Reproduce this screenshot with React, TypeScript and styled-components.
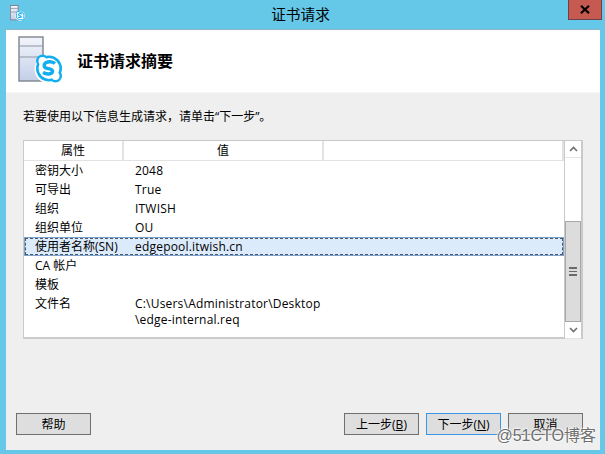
import { createGlobalStyle } from 'styled-components'
import styled from 'styled-components'

const GlobalStyle = createGlobalStyle`
  html, body {
    margin: 0;
    padding: 0;
    background: #65c8e9;
  }
  * { box-sizing: border-box; }
`

const Frame = styled.div`
  position: relative;
  width: 605px;
  height: 454px;
  background: #65c8e9;
  padding: 0 5px 4px 6px;
  display: flex;
  flex-direction: column;
  overflow: hidden;
  color: #000;
  font-family: "Open Sans", "Noto Sans CJK SC", sans-serif;
  font-size: 12px;
`

const TitleBar = styled.div`
  position: relative;
  height: 29px;
  flex: none;
  display: flex;
  align-items: center;
  justify-content: center;
  padding: 0 5px 3px 0;
  font-size: 14.67px;
`

const TitleIcon = styled.div`
  position: absolute;
  left: 4px;
  top: 5px;
  display: flex;
`

const CloseButton = styled.div`
  position: absolute;
  right: -2px;
  top: 0;
  width: 34px;
  height: 20px;
  background: #c75a50;
  border: 1px solid #6b4048;
  border-top: none;
  display: flex;
  align-items: center;
  justify-content: center;
`

const Client = styled.div`
  flex: 1;
  display: flex;
  flex-direction: column;
  background: #efefef;
  border-top: 1px solid #8fb4cc;
`

const Header = styled.div`
  height: 63px;
  flex: none;
  background: #fff;
  border-bottom: 1px solid #f6f6f6;
  display: flex;
  align-items: center;
  gap: 13px;
  padding: 0 0 3px 12px;
`

const HeaderTitle = styled.div`
  font-size: 16px;
  font-weight: 700;
`

const Body = styled.div`
  flex: 1;
  display: flex;
  flex-direction: column;
  padding: 16px 17px 15px 10px;
`

const Intro = styled.div`
  height: 16px;
  line-height: 16px;
  margin: 0 0 0 7px;
  font-size: 12px;
  white-space: nowrap;
`

const ListView = styled.div`
  margin: 15px 0 0 7px;
  height: 199px;
  border: 2px solid #cacaca;
  border-left-width: 1px;
  border-top-width: 1px;
  background: #fff;
  display: flex;
`

const ListMain = styled.div`
  flex: 1;
  min-width: 0;
`

const HeaderRow = styled.div`
  height: 20px;
  display: grid;
  grid-template-columns: 100px 200px 1fr;
  border-bottom: 1px solid #e2e2e2;
`

const HeaderCell = styled.div`
  display: flex;
  align-items: center;
  justify-content: center;
  border-right: 2px solid #e2e2e2;
  font-size: 12px;
  padding-bottom: 1px;
`

const Row = styled.div<{ $selected?: boolean }>`
  position: relative;
  height: 19px;
  display: grid;
  grid-template-columns: 100px 1fr;
  padding-left: 11px;
  align-items: center;
  line-height: 19px;
  white-space: nowrap;
  background: ${({ $selected }) => ($selected ? '#dcebfc' : 'transparent')};
  ${({ $selected }) =>
    $selected
      ? `outline: 1px dashed #4c5866; outline-offset: -2px; box-shadow: inset 0 0 0 1px #7da2ce;`
      : ''}
`

const FileRow = styled(Row)`
  height: 34px;
  align-items: start;
  line-height: 16px;
  padding-top: 2px;
`

const Value = styled.span`
  letter-spacing: 0.2px;
`

const ScrollBar = styled.div`
  width: 17px;
  flex: none;
  display: flex;
  flex-direction: column;
  border-left: 1px solid #cacaca;
`

const ScrollArrow = styled.div`
  height: 17px;
  flex: none;
  display: flex;
  align-items: center;
  justify-content: center;
  background: #fff;
  border-bottom: 1px solid #e4e4e4;
`

const ScrollTrack = styled.div`
  flex: 1;
  display: flex;
  flex-direction: column;
  background: #fff;
  padding-top: 63px;
`

const ScrollThumb = styled.div`
  height: 101px;
  background: #dcdcdc;
  border: 1px solid #a8a8a8;
  display: flex;
  align-items: center;
  justify-content: center;
`

const Grip = styled.div`
  width: 8px;
  height: 9px;
  border-top: 2px solid #6a6a6a;
  border-bottom: 2px solid #6a6a6a;
  background: linear-gradient(#6a6a6a, #6a6a6a) center / 100% 1px no-repeat;
`

const Footer = styled.div`
  margin-top: auto;
  display: flex;
  justify-content: space-between;
`

const ButtonGroup = styled.div`
  display: flex;
  gap: 7px;
`

const Button = styled.button<{ $focused?: boolean }>`
  width: 75px;
  height: 22px;
  padding: 0;
  background: #dedede;
  border: 1px solid ${({ $focused }) => ($focused ? '#3c96e6' : '#707070')};
  font-family: inherit;
  font-size: 12px;
  color: #000;
  display: flex;
  align-items: center;
  justify-content: center;
`

const Underlined = styled.span`
  text-decoration: underline;
`

const Watermark = styled.div`
  position: absolute;
  right: 9px;
  bottom: 8px;
  font-family: "Liberation Sans", "Noto Sans CJK SC", sans-serif;
  font-size: 16px;
  line-height: 20px;
  color: #6f6f6f;
  text-shadow: 0 0 2px #fff, 0 0 2px #fff, 0 0 3px #fff;
  white-space: nowrap;
`

function CertIcon({ size }: { size: 'large' | 'small' }) {
  const large = size === 'large'
  return (
    <svg width={large ? 46 : 15} height={large ? 48 : 16} viewBox="0 0 46 48">
      <defs>
        <linearGradient id={`srv-${size}`} x1="0" y1="0" x2="0" y2="1">
          <stop offset="0" stopColor="#f4f5fb" />
          <stop offset="1" stopColor="#c3cfe8" />
        </linearGradient>
      </defs>
      <rect x="1" y="1" width="24" height="44" fill={`url(#srv-${size})`} stroke="#7d8591" strokeWidth={large ? 1.4 : 3} />
      <path d="M1 10H25M1 21H25" stroke="#8d95a1" strokeWidth={large ? 1.2 : 2.5} />
      <circle cx="31" cy="33" r="14.5" fill="#fff" />
      <circle cx="24.5" cy="25" r="6.5" fill="#12aef0" />
      <circle cx="37.5" cy="40" r="6.5" fill="#12aef0" />
      <circle cx="31" cy="32.5" r="13" fill="#12aef0" />
      <circle cx="24.5" cy="25" r="4" fill="#fff" />
      <circle cx="37.5" cy="40" r="4" fill="#fff" />
      <circle cx="31" cy="32.5" r="10.4" fill="#fff" />
      <path
        d="M37 27.4C35.2 25.8 30.8 25.2 28.2 26.6C25.4 28.1 25.6 31.2 28.4 32.2C30.4 32.9 34 33 34.6 34.9C35.2 37.6 29.6 39.2 25 36.6"
        fill="none"
        stroke="#12aef0"
        strokeWidth="3.4"
      />
    </svg>
  )
}

const rows = [
  ['密钥大小', '2048'],
  ['可导出', 'True'],
  ['组织', 'ITWISH'],
  ['组织单位', 'OU'],
]

export default function App() {
  return (
    <>
      <GlobalStyle />
      <Frame>
        <TitleBar>
          <TitleIcon>
            <CertIcon size="small" />
          </TitleIcon>
          证书请求
          <CloseButton>
            <svg width="10" height="9" viewBox="0 0 10 9">
              <path d="M1 0.8L9 8.2M9 0.8L1 8.2" stroke="#000" strokeWidth="2.2" />
            </svg>
          </CloseButton>
        </TitleBar>
        <Client>
          <Header>
            <CertIcon size="large" />
            <HeaderTitle>证书请求摘要</HeaderTitle>
          </Header>
          <Body>
            <Intro>若要使用以下信息生成请求，请单击“下一步”。</Intro>
            <ListView>
              <ListMain>
                <HeaderRow>
                  <HeaderCell>属性</HeaderCell>
                  <HeaderCell>值</HeaderCell>
                  <HeaderCell />
                </HeaderRow>
                {rows.map(([name, value]) => (
                  <Row key={name}>
                    <span>{name}</span>
                    <Value>{value}</Value>
                  </Row>
                ))}
                <Row $selected>
                  <span>使用者名称(SN)</span>
                  <Value>edgepool.itwish.cn</Value>
                </Row>
                <Row>
                  <span>CA 帐户</span>
                  <span />
                </Row>
                <Row>
                  <span>模板</span>
                  <span />
                </Row>
                <FileRow>
                  <span>文件名</span>
                  <Value>
                    C:\Users\Administrator\Desktop
                    <br />
                    \edge-internal.req
                  </Value>
                </FileRow>
              </ListMain>
              <ScrollBar>
                <ScrollArrow>
                  <svg width="9" height="6" viewBox="0 0 9 6">
                    <path d="M1 5L4.5 1.5L8 5" fill="none" stroke="#707070" strokeWidth="1.6" />
                  </svg>
                </ScrollArrow>
                <ScrollTrack>
                  <ScrollThumb>
                    <Grip />
                  </ScrollThumb>
                </ScrollTrack>
                <ScrollArrow>
                  <svg width="9" height="6" viewBox="0 0 9 6">
                    <path d="M1 1L4.5 4.5L8 1" fill="none" stroke="#707070" strokeWidth="1.6" />
                  </svg>
                </ScrollArrow>
              </ScrollBar>
            </ListView>
            <Footer>
              <Button>帮助</Button>
              <ButtonGroup>
                <Button>
                  上一步(<Underlined>B</Underlined>)
                </Button>
                <Button $focused>
                  下一步(<Underlined>N</Underlined>)
                </Button>
                <Button>取消</Button>
              </ButtonGroup>
            </Footer>
          </Body>
        </Client>
        <Watermark>@51CTO博客</Watermark>
      </Frame>
    </>
  )
}
